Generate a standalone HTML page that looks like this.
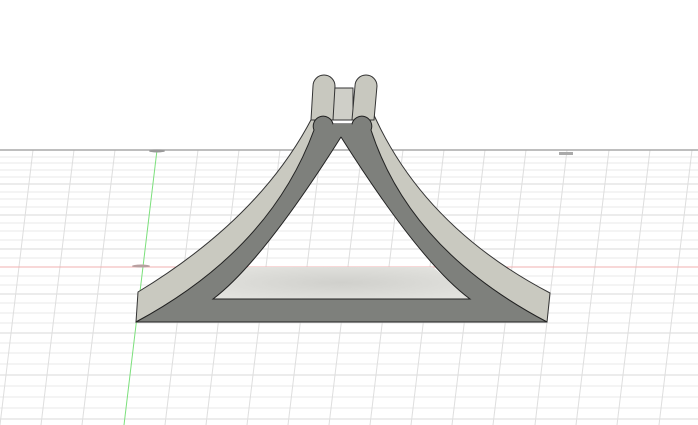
<!DOCTYPE html>
<html><head><meta charset="utf-8"><style>html,body{margin:0;padding:0;background:#fff;}svg{display:block}</style></head>
<body>
<svg width="698" height="425" viewBox="0 0 698 425" xmlns="http://www.w3.org/2000/svg">
<defs><radialGradient id="fl" cx="0.5" cy="0.5" r="0.6"><stop offset="0" stop-color="#d0d0cc"/><stop offset="1" stop-color="#e2e2de"/></radialGradient></defs>
<rect width="698" height="425" fill="#fff"/>
<g stroke="#e8e8e8" stroke-width="1">
<line x1="0" y1="157" x2="698" y2="157"/><line x1="0" y1="163" x2="698" y2="163"/>
<line x1="0" y1="170" x2="698" y2="170"/><line x1="0" y1="177" x2="698" y2="177"/>
<line x1="0" y1="184" x2="698" y2="184"/><line x1="0" y1="192" x2="698" y2="192"/>
<line x1="0" y1="199" x2="698" y2="199"/><line x1="0" y1="207" x2="698" y2="207"/>
<line x1="0" y1="215" x2="698" y2="215"/><line x1="0" y1="223" x2="698" y2="223"/>
<line x1="0" y1="231" x2="698" y2="231"/><line x1="0" y1="240" x2="698" y2="240"/>
<line x1="0" y1="249" x2="698" y2="249"/><line x1="0" y1="258" x2="698" y2="258"/>
<line x1="0" y1="276" x2="698" y2="276"/><line x1="0" y1="285" x2="698" y2="285"/>
<line x1="0" y1="294" x2="698" y2="294"/><line x1="0" y1="303" x2="698" y2="303"/>
<line x1="0" y1="313" x2="698" y2="313"/><line x1="0" y1="323" x2="698" y2="323"/>
<line x1="0" y1="333" x2="698" y2="333"/><line x1="0" y1="343" x2="698" y2="343"/>
<line x1="0" y1="353" x2="698" y2="353"/><line x1="0" y1="364" x2="698" y2="364"/>
<line x1="0" y1="375" x2="698" y2="375"/><line x1="0" y1="386" x2="698" y2="386"/>
<line x1="0" y1="397" x2="698" y2="397"/><line x1="0" y1="408" x2="698" y2="408"/>
<line x1="0" y1="419" x2="698" y2="419"/>
</g>
<g stroke="#dadada" stroke-width="1">
<line x1="0" y1="184" x2="698" y2="184"/><line x1="0" y1="215" x2="698" y2="215"/>
<line x1="0" y1="249" x2="698" y2="249"/><line x1="0" y1="294" x2="698" y2="294"/>
<line x1="0" y1="333" x2="698" y2="333"/><line x1="0" y1="375" x2="698" y2="375"/>
<line x1="0" y1="419" x2="698" y2="419"/>
</g>
<g stroke="#dedede" stroke-width="1">
<line x1="33" y1="150" x2="0" y2="425"/><line x1="74" y1="150" x2="41" y2="425"/>
<line x1="115" y1="150" x2="82" y2="425"/><line x1="198" y1="150" x2="165" y2="425"/>
<line x1="239" y1="150" x2="206" y2="425"/><line x1="280" y1="150" x2="247" y2="425"/>
<line x1="321" y1="150" x2="288" y2="425"/><line x1="362" y1="150" x2="329" y2="425"/>
<line x1="403" y1="150" x2="370" y2="425"/><line x1="444" y1="150" x2="411" y2="425"/>
<line x1="485" y1="150" x2="452" y2="425"/><line x1="526" y1="150" x2="493" y2="425"/>
<line x1="567" y1="150" x2="535" y2="425"/><line x1="609" y1="150" x2="576" y2="425"/>
<line x1="650" y1="150" x2="617" y2="425"/><line x1="692" y1="150" x2="659" y2="425"/>
</g>
<line x1="0" y1="150" x2="698" y2="150" stroke="#a8a8a8" stroke-width="1.5"/>
<line x1="0" y1="267" x2="698" y2="267" stroke="#f0b0b0" stroke-width="1"/>
<line x1="157" y1="150" x2="124" y2="425" stroke="#7be07b" stroke-width="1"/>
<ellipse cx="157" cy="151" rx="8" ry="1.5" fill="#999"/>
<ellipse cx="141" cy="266" rx="9" ry="1.5" fill="#b8a0a0"/>
<rect x="559" y="152" width="14" height="3" fill="#aaa"/>

<path d="M136,322 L138,292 Q265,215 316,110 L330,122 Q270,250 136,322 Z" fill="#c9c9c0" stroke="#333" stroke-width="1"/>
<path d="M547,322 L550,293 Q420,225 370,106 L356,122 Q410,250 547,322 Z" fill="#c9c9c0" stroke="#333" stroke-width="1"/>
<path d="M248,267 L433,267 L470,299 L213,299 Z" fill="url(#fl)"/>
<rect x="333" y="88" width="20" height="32" fill="#cfcfc8" stroke="#333" stroke-width="1"/>
<path d="M313,86 A11,11 0 0 1 335,86 L333,120 L311,120 Z" fill="#c8c8bf" stroke="#333" stroke-width="1"/>
<path d="M355,86 A11,11 0 0 1 377,86 L374,120 L352,120 Z" fill="#c8c8bf" stroke="#333" stroke-width="1"/>
<path fill-rule="evenodd" d="M136,322 Q270,250 314,130 A10,10 0 1 1 333,124 L352,124 A10,10 0 1 1 371,130 Q410,250 547,322 Z M213,299 Q262,262 341,137 Q420,262 470,299 Z" fill="#7e807c" stroke="#222" stroke-width="1"/>
<path d="M333,124 L352,124 L341,137 Z" fill="#7e807c"/>
</svg>
</body></html>
